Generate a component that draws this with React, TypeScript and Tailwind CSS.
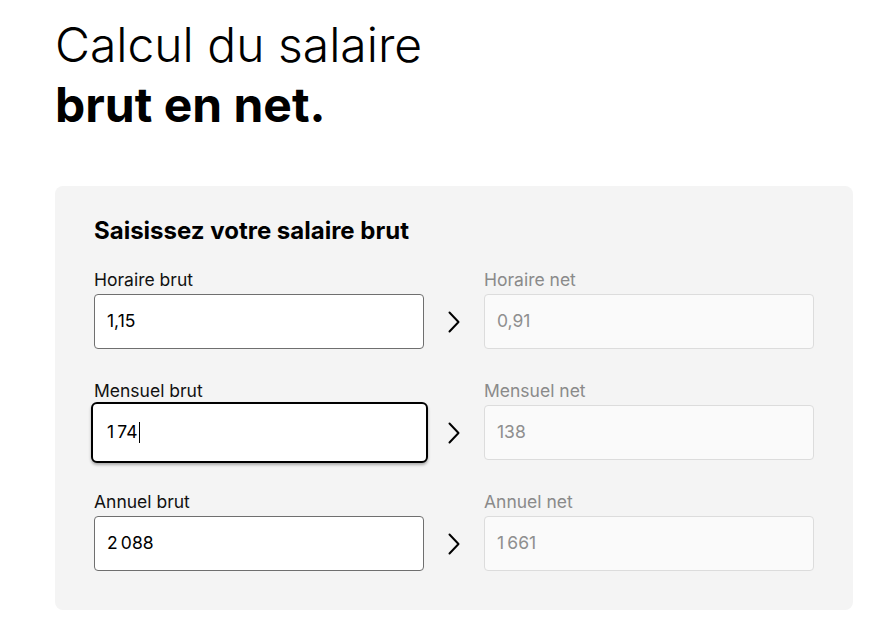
import React from 'react';

type Row = { brutLabel: string; brut: string; netLabel: string; net: string; focused?: boolean };

// values are formatted with a narrow no-break space as thousands separator
const rows: Row[] = [
  { brutLabel: 'Horaire brut', brut: '1,15', netLabel: 'Horaire net', net: '0,91' },
  { brutLabel: 'Mensuel brut', brut: '1\u202F74', netLabel: 'Mensuel net', net: '138', focused: true },
  { brutLabel: 'Annuel brut', brut: '2\u202F088', netLabel: 'Annuel net', net: '1\u202F661' },
];

function Chevron() {
  return (
    <svg width="14" height="22" viewBox="0 0 14 22" fill="none" className="text-black">
      <path d="M2.5 1.5l9 9.5-9 9.5" stroke="currentColor" strokeWidth="2" strokeLinecap="round" strokeLinejoin="round" />
    </svg>
  );
}

export default function App() {
  return (
    <div className="min-h-screen bg-white text-black font-['Inter','Liberation_Sans',sans-serif]">
      <div className="pl-[55px] pt-[15px]">
        <h1 className="text-[48px] leading-[60px]">
          <span className="font-light">Calcul du salaire</span>
          <br />
          <span className="font-bold">brut en net.</span>
        </h1>

        <div className="mt-[51px] w-[798px] rounded-lg bg-[#f4f4f4] px-[39px] pt-[29px] pb-[39px]">
          <h2 className="text-[24px] leading-8 font-bold mb-[21px]">Saisissez votre salaire brut</h2>
          <div className="flex flex-col gap-[30px]">
            {rows.map((r) => (
              <div key={r.brutLabel} className="grid grid-cols-[330px_60px_330px] items-end">
                <div>
                  <div className="text-[17.5px] leading-6 mb-[2px] text-[#111]">{r.brutLabel}</div>
                  {r.focused ? (
                    <div className="-ml-[3px] -mr-[4px] -my-[3px] h-[61px] rounded-md border-2 border-black bg-white shadow-[0_2px_3px_rgba(0,0,0,0.3)] flex items-center px-[14px]">
                      <span className="text-[17.5px]">{r.brut}</span>
                      <span className="ml-[1px] inline-block w-px h-[21px] bg-black" />
                    </div>
                  ) : (
                    <div className="h-[55px] rounded border border-[#6f6f6f] bg-white flex items-center px-[12px]">
                      <span className="text-[17.5px]">{r.brut}</span>
                    </div>
                  )}
                </div>
                <div className="h-[55px] flex items-center justify-center">
                  <Chevron />
                </div>
                <div>
                  <div className="text-[17.5px] leading-6 mb-[2px] text-[#8a8a8a]">{r.netLabel}</div>
                  <div className="h-[55px] rounded border border-[#dcdcdc] bg-[#fafafa] flex items-center px-[12px]">
                    <span className="text-[17.5px] text-[#8f8f8f]">{r.net}</span>
                  </div>
                </div>
              </div>
            ))}
          </div>
        </div>
      </div>
    </div>
  );
}
